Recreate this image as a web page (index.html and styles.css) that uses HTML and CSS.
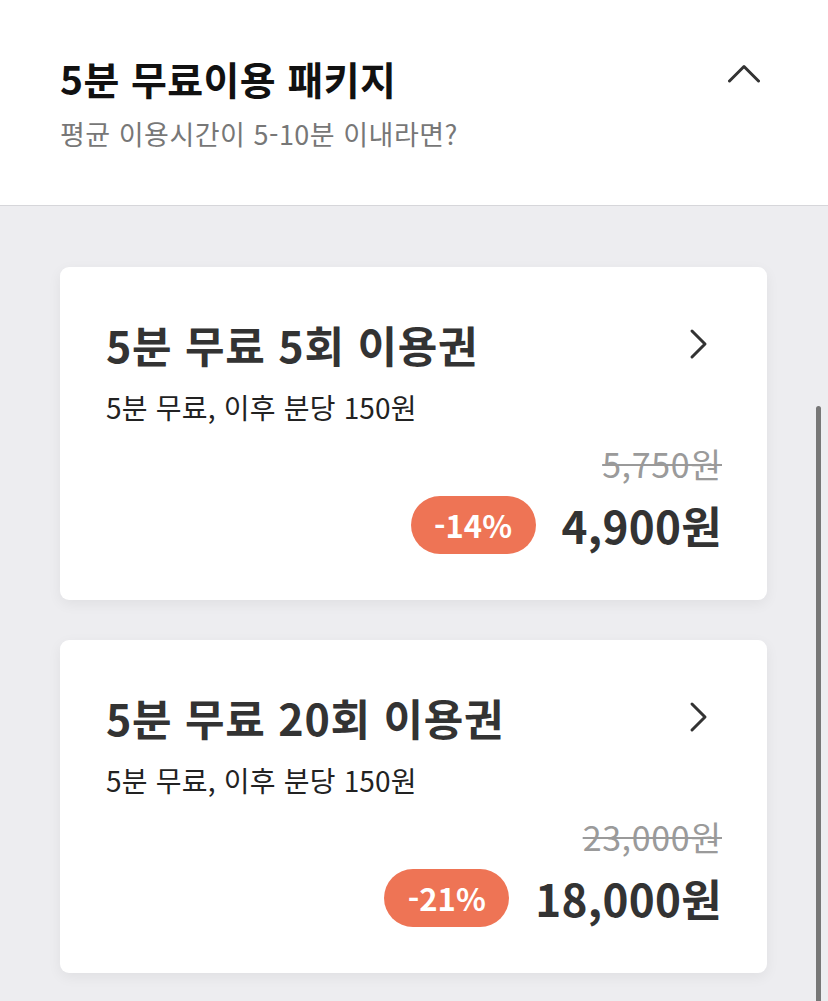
FILE: index.html
```html
<!DOCTYPE html>
<html lang="ko">
<head>
<meta charset="utf-8">
<link rel="stylesheet" href="styles.css">
</head>
<body>
<div class="page">
  <header class="head">
    <div class="head-text">
      <h1 class="head-title">5분 무료이용 패키지</h1>
      <p class="head-sub">평균 이용시간이 5-10분 이내라면?</p>
    </div>
    <svg class="chev-up" width="32" height="19" viewBox="0 0 32 19"><path d="M1.5 17 L16 2.5 L30.5 17" fill="none" stroke="#333" stroke-width="3" stroke-linecap="round" stroke-linejoin="round"/></svg>
  </header>
  <main class="list">
    <section class="card">
      <div class="card-top">
        <div>
          <h2 class="card-title">5분 무료 5회 이용권</h2>
          <p class="card-sub">5분 무료, 이후 분당 150원</p>
        </div>
        <svg class="chev-right" width="20" height="32" viewBox="0 0 20 32"><path d="M3 3 L16 16 L3 29" fill="none" stroke="#333" stroke-width="3" stroke-linecap="round" stroke-linejoin="round"/></svg>
      </div>
      <div class="prices">
        <div class="orig">5,750원</div>
        <div class="now-row">
          <span class="badge">-14%</span>
          <span class="now">4,900원</span>
        </div>
      </div>
    </section>
    <section class="card">
      <div class="card-top">
        <div>
          <h2 class="card-title">5분 무료 20회 이용권</h2>
          <p class="card-sub">5분 무료, 이후 분당 150원</p>
        </div>
        <svg class="chev-right" width="20" height="32" viewBox="0 0 20 32"><path d="M3 3 L16 16 L3 29" fill="none" stroke="#333" stroke-width="3" stroke-linecap="round" stroke-linejoin="round"/></svg>
      </div>
      <div class="prices">
        <div class="orig">23,000원</div>
        <div class="now-row">
          <span class="badge">-21%</span>
          <span class="now">18,000원</span>
        </div>
      </div>
    </section>
  </main>
  <div class="scrollbar"></div>
</div>
</body>
</html>
```
FILE: styles.css
```css
html, body {
  margin: 0;
  padding: 0;
}
body {
  font-family: "Noto Sans CJK KR", "Noto Sans", sans-serif;
  background: #ededf0;
  width: 828px;
  height: 1001px;
  overflow: hidden;
}
.page {
  position: relative;
  height: 1001px;
}
.head {
  background: #fff;
  height: 206px;
  border-bottom: 1px solid #d6d6da;
  box-sizing: border-box;
  display: flex;
  justify-content: space-between;
  align-items: flex-start;
  padding: 54px 68px 0 60px;
}
.head-title {
  margin: 0;
  font-size: 39px;
  font-weight: 700;
  line-height: 48px;
  color: #111;
  letter-spacing: 0.4px;
}
.head-sub {
  margin: 14px 0 0;
  font-size: 27px;
  line-height: 36px;
  color: #777;
  letter-spacing: 0.5px;
}
.chev-up {
  display: block;
  margin-top: 10px;
}
.list {
  padding: 61px 61px 0 60px;
  display: flex;
  flex-direction: column;
  gap: 40px;
}
.card {
  background: #fff;
  border-radius: 9px;
  box-shadow: 0 4px 14px rgba(0, 0, 0, 0.06);
  height: 333px;
  box-sizing: border-box;
  padding: 51px 45px 0 46px;
}
.card-top {
  display: flex;
  justify-content: space-between;
  align-items: flex-start;
}
.card-title {
  margin: 0;
  font-size: 43px;
  font-weight: 700;
  line-height: 52px;
  color: #333;
  letter-spacing: 0.7px;
}
.card-sub {
  margin: 19px 0 0;
  font-size: 28px;
  line-height: 36px;
  color: #222;
  letter-spacing: 0.2px;
}
.chev-right {
  margin-top: 10px;
  margin-right: 13px;
}
.prices {
  display: flex;
  flex-direction: column;
  align-items: flex-end;
  margin-top: 18px;
}
.orig {
  font-size: 34px;
  line-height: 42px;
  color: #9a9a9a;
  text-decoration: line-through;
  text-decoration-thickness: 2px;
  letter-spacing: 0.6px;
}
.now-row {
  display: flex;
  align-items: center;
  gap: 26px;
  margin-top: 11px;
}
.badge {
  background: #ee7455;
  color: #fff;
  font-size: 31px;
  font-weight: 700;
  height: 58px;
  line-height: 58px;
  width: 125px;
  text-align: center;
  border-radius: 29px;
}
.now {
  font-size: 44px;
  font-weight: 700;
  line-height: 58px;
  color: #333;
  letter-spacing: 0.3px;
}
.scrollbar {
  position: absolute;
  right: 7px;
  top: 406px;
  width: 5px;
  height: 600px;
  border-radius: 3px;
  background: #777;
}
```
